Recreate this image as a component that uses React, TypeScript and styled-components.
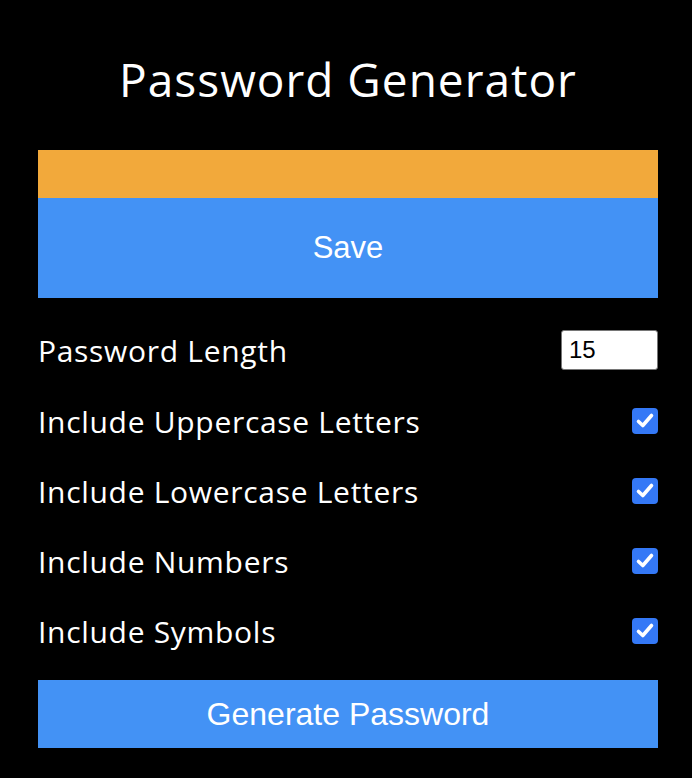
import React, { useState } from "react";
import styled, { createGlobalStyle } from "styled-components";

const GlobalStyle = createGlobalStyle`
  html, body {
    margin: 0;
    padding: 0;
    background: #000000;
  }
  body {
    font-family: "Open Sans", "Lato", sans-serif;
    color: #ffffff;
  }
`;

const Page = styled.div`
  width: 620px;
  margin-left: 38px;
  display: flex;
  flex-direction: column;
`;

const Title = styled.h1`
  margin: 0;
  height: 150px;
  display: flex;
  align-items: center;
  justify-content: center;
  padding-top: 8px;
  box-sizing: border-box;
  font-family: "Open Sans", sans-serif;
  font-weight: 500;
  font-size: 46px;
  letter-spacing: 1px;
  color: #ffffff;
`;

const ResultBar = styled.div`
  height: 48px;
  background: #f2a93b;
`;

const ActionButton = styled.button<{ $height: number; $size: number }>`
  display: flex;
  align-items: center;
  justify-content: center;
  width: 100%;
  height: ${(p) => p.$height}px;
  border: none;
  margin: 0;
  padding: 0;
  background: #4392f5;
  color: #ffffff;
  font-family: "Liberation Sans", Arial, sans-serif;
  font-size: ${(p) => p.$size}px;
  cursor: pointer;
`;

const Settings = styled.div`
  display: flex;
  flex-direction: column;
  padding-top: 16px;
  margin-bottom: 14px;
`;

const Row = styled.div`
  height: 70px;
  display: flex;
  align-items: center;
  justify-content: space-between;

  &:first-child {
    height: 72px;
  }
`;

const Label = styled.label`
  font-family: "Open Sans", sans-serif;
  font-size: 30px;
  letter-spacing: 0.7px;
  color: #ffffff;
`;

const NumberInput = styled.input`
  width: 97px;
  height: 40px;
  box-sizing: border-box;
  border: 1.5px solid #767676;
  border-radius: 3px;
  padding: 0 7px;
  background: #ffffff;
  color: #000000;
  font-family: "Liberation Sans", Arial, sans-serif;
  font-size: 24px;
  outline: none;
`;

const CheckBox = styled.span<{ $checked: boolean }>`
  width: 26px;
  height: 26px;
  box-sizing: border-box;
  border-radius: 4px;
  background: ${(p) => (p.$checked ? "#3478f6" : "#ffffff")};
  display: flex;
  align-items: center;
  justify-content: center;
  cursor: pointer;
`;

const options = [
  "Include Uppercase Letters",
  "Include Lowercase Letters",
  "Include Numbers",
  "Include Symbols",
];

export default function App() {
  const [checked, setChecked] = useState<boolean[]>([true, true, true, true]);
  return (
    <>
      <GlobalStyle />
      <Page>
        <Title>Password Generator</Title>
        <ResultBar />
        <ActionButton $height={100} $size={31}>
          Save
        </ActionButton>
        <Settings>
          <Row>
            <Label>Password Length</Label>
            <NumberInput type="text" defaultValue="15" />
          </Row>
          {options.map((o, i) => (
            <Row key={o}>
              <Label>{o}</Label>
              <CheckBox
                $checked={checked[i]}
                onClick={() =>
                  setChecked((c) => c.map((v, j) => (j === i ? !v : v)))
                }
              >
                {checked[i] && (
                  <svg width="26" height="26" viewBox="0 0 26 26">
                    <path
                      d="M6.5 13.5 L10.8 17.5 L19.5 7.5"
                      fill="none"
                      stroke="#ffffff"
                      strokeWidth="3.6"
                      strokeLinecap="round"
                      strokeLinejoin="round"
                    />
                  </svg>
                )}
              </CheckBox>
            </Row>
          ))}
        </Settings>
        <ActionButton $height={68} $size={32}>
          Generate Password
        </ActionButton>
      </Page>
    </>
  );
}
